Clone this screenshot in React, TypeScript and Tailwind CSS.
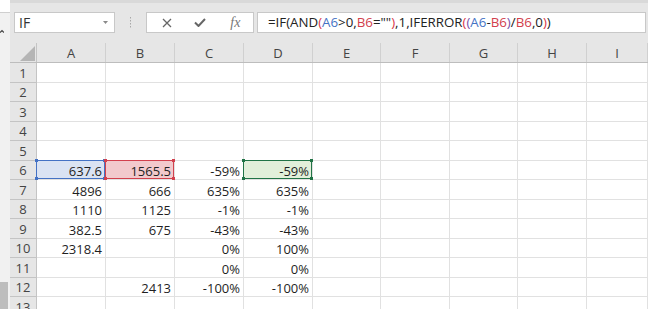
import React from "react";

const colWidths = [
  "w-[69px]",
  "w-[69px]",
  "w-[69px]",
  "w-[69px]",
  "w-[68px]",
  "w-[69px]",
  "w-[68px]",
  "w-[69px]",
  "flex-1",
];
const letters = ["A", "B", "C", "D", "E", "F", "G", "H", "I"];

const rowHeights = [
  "h-[20px]",
  "h-[19px]",
  "h-[20px]",
  "h-[19px]",
  "h-[20px]",
  "h-[19px]",
  "h-[20px]",
  "h-[19px]",
  "h-[20px]",
  "h-[19px]",
  "h-[20px]",
  "h-[19px]",
  "h-[20px]",
];

const data: Record<number, string[]> = {
  6: ["637.6", "1565.5", "-59%", "-59%"],
  7: ["4896", "666", "635%", "635%"],
  8: ["1110", "1125", "-1%", "-1%"],
  9: ["382.5", "675", "-43%", "-43%"],
  10: ["2318.4", "", "0%", "100%"],
  11: ["", "", "0%", "0%"],
  12: ["", "2413", "-100%", "-100%"],
};

type Hl = { fill: string; border: string; dot: string };
const highlights: Record<string, Hl> = {
  "6-0": { fill: "bg-[#dae3f3]", border: "border-[#4472c4]", dot: "bg-[#4472c4]" },
  "6-1": { fill: "bg-[#f2c9cc]", border: "border-[#d2404d]", dot: "bg-[#d2404d]" },
  "6-3": { fill: "bg-[#e2efda]", border: "border-[#217346]", dot: "bg-[#217346]" },
};

const Ref = ({ children, c }: { children: React.ReactNode; c: string }) => (
  <span className={c}>{children}</span>
);

function FormulaBar() {
  return (
    <div className="flex h-[43px] shrink-0 flex-col">
      <div className="h-[3px] bg-[#d9d9d9]" />
      <div className="mt-[9px] flex h-[21px] items-center">
        <div className="ml-[4px] flex h-[21px] w-[101px] items-center justify-between border border-[#c8c8c8] bg-white pl-[4px] pr-[6px] text-[14px] text-[#333]">
          <span>IF</span>
          <svg width="5" height="3" viewBox="0 0 5 3">
            <path d="M0 0h5L2.5 3z" fill="#8a8a8a" />
          </svg>
        </div>
        <div className="flex w-[31px] justify-center">
          <svg width="2" height="11" viewBox="0 0 2 11">
            <rect x="0" y="0" width="1" height="1.5" fill="#a8a8a8" />
            <rect x="0" y="3" width="1" height="1.5" fill="#a8a8a8" />
            <rect x="0" y="6" width="1" height="1.5" fill="#a8a8a8" />
            <rect x="0" y="9" width="1" height="1.5" fill="#a8a8a8" />
          </svg>
        </div>
        <div className="flex h-[21px] w-[108px] items-center border border-[#c8c8c8] bg-white">
          <div className="flex w-[36px] justify-center pl-[4px]">
            <svg width="10" height="10" viewBox="0 0 10 10">
              <path d="M1 1l8 8M9 1l-8 8" stroke="#666" strokeWidth="1.3" />
            </svg>
          </div>
          <div className="flex w-[36px] justify-center">
            <svg width="12" height="9" viewBox="0 0 12 9">
              <path d="M1 4.5l3.5 3.5L11 1" stroke="#666" strokeWidth="2" fill="none" />
            </svg>
          </div>
          <div className="flex w-[36px] justify-center font-['Liberation_Serif'] text-[14px] italic text-[#777]">
            fx
          </div>
        </div>
        <div className="ml-[3px] flex h-[21px] w-[389px] items-center border border-[#c8c8c8] bg-white pl-[10px] font-['Open_Sans',sans-serif] text-[13.3px] whitespace-nowrap text-[#222]">
          =IF(AND<Ref c="text-[#d9364a]">(</Ref>
          <Ref c="text-[#4472c4]">A6</Ref>&gt;0,<Ref c="text-[#d2404d]">B6</Ref>=""
          <Ref c="text-[#d9364a]">)</Ref>,1,IFERROR<Ref c="text-[#d9364a]">(</Ref>
          <Ref c="text-[#7a4ea8]">(</Ref>
          <Ref c="text-[#4472c4]">A6</Ref>-<Ref c="text-[#d2404d]">B6</Ref>
          <Ref c="text-[#7a4ea8]">)</Ref>/<Ref c="text-[#d2404d]">B6</Ref>,0
          <Ref c="text-[#d9364a]">)</Ref>)
        </div>
      </div>
    </div>
  );
}

function Cell({ r, c, value }: { r: number; c: number; value: string }) {
  const hl = highlights[`${r}-${c}`];
  return (
    <div
      className={`relative flex items-end justify-end border-r border-b border-[#e1e1e1] pr-[3px] leading-[16px] ${colWidths[c]} ${hl ? hl.fill : "bg-white"}`}
    >
      {value}
      {hl && (
        <div className={`absolute -top-[1px] -left-[1px] right-0 bottom-0 border ${hl.border}`}>
          <div className={`absolute -top-[2px] -left-[2px] h-[3px] w-[3px] ${hl.dot}`} />
          <div className={`absolute -top-[2px] -right-[2px] h-[3px] w-[3px] ${hl.dot}`} />
          <div className={`absolute -bottom-[2px] -left-[2px] h-[3px] w-[3px] ${hl.dot}`} />
          <div className={`absolute -bottom-[2px] -right-[2px] h-[3px] w-[3px] ${hl.dot}`} />
        </div>
      )}
    </div>
  );
}

export default function App() {
  return (
    <div className="flex h-[309px] w-[648px] overflow-hidden bg-[#e6e6e6] font-['Open_Sans',sans-serif] text-[13px] text-[#1f1f1f]">
      {/* collapsed side panel */}
      <div className="flex w-[10px] flex-col bg-[#f1f1f1]">
        <div className="h-[13px] shrink-0 border-b border-[#cfcfcf] bg-white" />
        <div className="mt-[16px] h-[4px] shrink-0">
          <svg width="4" height="4" viewBox="0 0 4 4">
            <path d="M0 3.5L2 1.5L4 3.5" stroke="#444" strokeWidth="1.2" fill="none" />
          </svg>
        </div>
        <div className="flex-1" />
        <div className="h-[27px] w-[8px] shrink-0 bg-[#bdbdbd]" />
      </div>

      <div className="flex flex-1 flex-col">
        <FormulaBar />

        {/* column headers */}
        <div className="flex h-[20px] shrink-0 border-b border-[#bdbdbd] text-[#444]">
          <div className="flex w-[27px] items-end justify-end border-r border-[#c4c4c4] pb-[1px] pr-[1px]">
            <svg width="15" height="15" viewBox="0 0 15 15">
              <path d="M15 0V15H0z" fill="#b5b5b5" />
            </svg>
          </div>
          {letters.map((l, i) => (
            <div
              key={l}
              className={`flex items-center justify-center border-r border-[#d0d0d0] leading-[16px] ${colWidths[i]}`}
            >
              {l}
            </div>
          ))}
        </div>

        {/* rows */}
        {rowHeights.map((h, idx) => {
          const r = idx + 1;
          const vals = data[r] || [];
          return (
            <div key={r} className={`flex shrink-0 ${h}`}>
              <div className="flex w-[27px] items-center justify-center border-r border-b border-[#c4c4c4] leading-[16px] text-[#444]">
                {r}
              </div>
              {letters.map((_, c) => (
                <Cell key={c} r={r} c={c} value={vals[c] || ""} />
              ))}
            </div>
          );
        })}
      </div>
    </div>
  );
}
